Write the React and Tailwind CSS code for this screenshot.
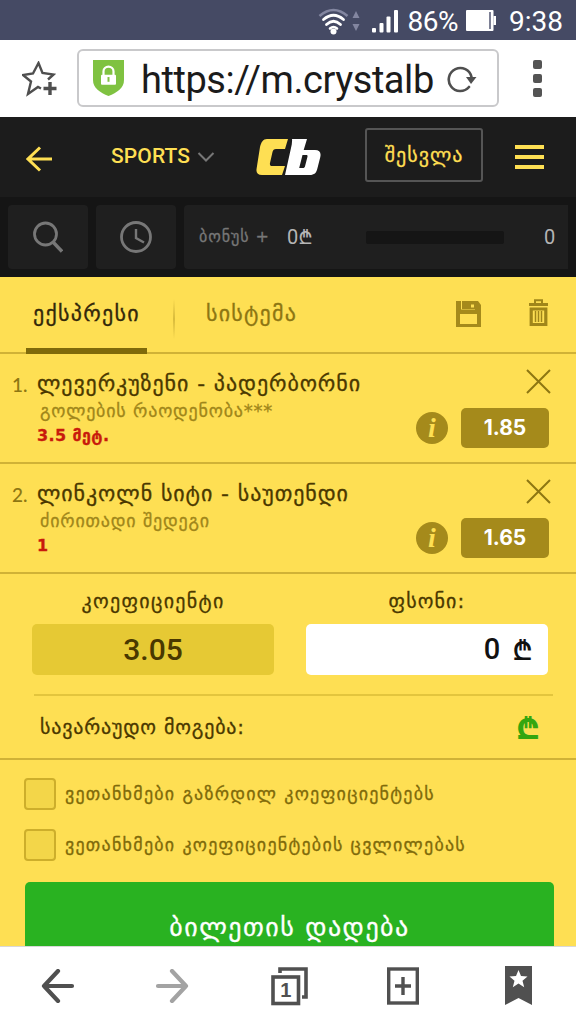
const geo = "font-['DejaVu_Sans',sans-serif] [-webkit-text-stroke:0.3px]";

function StatusBar() {
  return (
    <div className="flex h-10 shrink-0 items-center justify-end bg-[#454a64] pr-[13px] text-white">
      <svg width="44" height="30" viewBox="0 0 44 30" className="mr-[10px] mt-1" fill="none" strokeLinecap="round">
        <path d="M1.500 9Q15.500-3 29.500 9" stroke="#8386a0" strokeWidth="2.600" strokeLinecap="butt" />
        <path d="M5.500 12.500Q15.500 4 25.500 12.500" stroke="#fff" strokeWidth="2.800" />
        <path d="M8.500 17.500Q15.500 11 22.500 17.500" stroke="#fff" strokeWidth="2.800" />
        <path d="M12 21.500Q15.500 18.500 19 21.500" stroke="#fff" strokeWidth="2.600" />
        <circle cx="15.500" cy="24.500" r="3" fill="#fff" />
        <path d="M34.500 11L38 4l3.500 7zM34.500 17h7L38 24z" fill="#8386a0" />
      </svg>
      <svg width="28" height="26" viewBox="0 0 28 26" className="mr-2 mt-1" fill="#fff">
        <rect x="0" y="19" width="4" height="4.500" rx="1" />
        <rect x="7.500" y="14" width="4" height="9.500" rx="1" />
        <rect x="14.500" y="7.500" width="4" height="16" rx="1" />
        <rect x="22" y="1" width="4" height="22.500" rx="1" />
      </svg>
      <span className="mt-[3px] mr-[2px] font-[Roboto,sans-serif] text-[28px] leading-none tracking-[-0.5px]">86%</span>
      <svg width="31" height="21" viewBox="0 0 31 21" className="ml-[6px] mr-3">
        <rect x="0" y="0" width="27.500" height="21" rx="1" fill="#fff" />
        <rect x="27.500" y="6" width="2.500" height="9" fill="#fff" />
        <rect x="23" y="2" width="2" height="17" fill="#7d8095" />
      </svg>
      <span className="mt-[3px] font-[Roboto,sans-serif] text-[28px] leading-none">9:38</span>
    </div>
  );
}

function AddressBar() {
  return (
    <div className="flex h-[77px] shrink-0 items-center bg-white pl-[22px]">
      <svg width="36" height="36" viewBox="0 0 36 36" fill="none" stroke="#4f4f4f" strokeWidth="2.400">
        <path d="M19 27.500l-3-1.500-10 7 3-12.500-8-6.500 10-1.500L16.500 2l4 10 11 1.500-5.500 5" />
        <path d="M28 21v13M21.500 27.500h13" strokeWidth="3.400" />
      </svg>
      <div className="-mt-px ml-[19px] flex h-[58px] w-[422px] items-center rounded-md border-2 border-[#c9c9cb]">
        <svg width="31" height="36" viewBox="0 0 31 38" preserveAspectRatio="none" className="ml-[14px]">
          <path d="M0 0h31v21c0 9-7 13-15.500 17C7 34 0 30 0 21z" fill="#7fc241" />
          <path d="M10.500 16v-4a5 5 0 0 1 10 0v4" fill="none" stroke="#fff" strokeWidth="2.200" />
          <rect x="8" y="15.500" width="15" height="10.500" rx="1" fill="#fff" />
          <path d="M15.500 18v5" stroke="#7fc241" strokeWidth="2" />
        </svg>
        <span className="mt-[3px] ml-[17px] w-[295px] overflow-hidden font-[Roboto,sans-serif] text-[38px] leading-[52px] tracking-[-0.45px] whitespace-nowrap text-[#1b1b1b]">
          https://m.crystalb
        </span>
        <svg width="30" height="30" viewBox="0 0 30 30" className="mt-[2px] ml-[11px]" fill="none">
          <path d="M22 23A11.500 11.500 0 1 1 24.500 13" stroke="#4f4f4f" strokeWidth="2.600" strokeLinecap="round" />
          <path d="M19 13h10.500l-5.500 7z" fill="#4f4f4f" />
        </svg>
      </div>
      <div className="ml-[34px] flex flex-col gap-[5px]">
        <span className="size-[9px] rounded-[2px] bg-[#545454]" />
        <span className="size-[9px] rounded-[2px] bg-[#545454]" />
        <span className="size-[9px] rounded-[2px] bg-[#545454]" />
      </div>
    </div>
  );
}

function Header() {
  return (
    <div className="flex h-20 shrink-0 items-center bg-[#1c1c1c] pl-[26px]">
      <svg width="26" height="26" viewBox="0 0 26 26" className="mt-[3px]" fill="none" stroke="#fedf53" strokeWidth="3">
        <path d="M14 1.500L2 13l12 11.500M2 13h24" />
      </svg>
      <span className="ml-[59px] w-[78px] font-[Roboto,sans-serif] text-[21px] font-medium tracking-[0.1px] text-[#fedf53]">SPORTS</span>
      <svg width="18" height="10" viewBox="0 0 18 10" className="ml-[8px]" fill="none" stroke="#777" strokeWidth="2">
        <path d="M1.500 1L9 8.500 16.500 1" />
      </svg>
      <svg width="65" height="38" viewBox="0 0 65 38" className="ml-[41px]">
        <path d="M11 1h21l-3 10H20c-2 0-3 1-3.500 3L14 25c-.4 2 .3 3 2 3h13l-3 9H6c-4.500 0-6.300-2.500-5.300-7L4 9c1.300-5 3-8 7-8z" fill="#fedf53" />
        <path
          d="M36 1h15l-3.300 11H59c4.500 0 6.300 2.500 5.300 7L61.500 30c-1.200 5-3 7-8 7H29l6-27c.7-3 1.300-6 1-9zM46.500 17l-3.300 13h3.500c1.500 0 2-.5 2.400-2l2.300-9c.4-1.500 0-2-1.400-2z"
          fill="#fff"
          fillRule="evenodd"
        />
      </svg>
      <button className={`-mt-1 ml-[44px] flex h-[54px] w-[118px] items-center justify-center rounded-[3px] border-2 border-[#555] text-xl tracking-[1px] text-[#fedf53] ${geo}`}>
        შესვლა
      </button>
      <div className="ml-8 flex flex-col gap-[6px]">
        <span className="h-[4px] w-[29px] bg-[#fedf53]" />
        <span className="h-[4px] w-[29px] bg-[#fedf53]" />
        <span className="h-[4px] w-[29px] bg-[#fedf53]" />
      </div>
    </div>
  );
}

function BonusBar() {
  return (
    <div className="flex h-20 shrink-0 gap-2 bg-[#151515] p-2">
      <div className="flex w-20 items-center justify-center rounded bg-[#1f1f1f]">
        <svg width="30" height="32" viewBox="0 0 30 32" fill="none" stroke="#777" strokeWidth="2.800">
          <circle cx="12.500" cy="13" r="11" />
          <path d="M20 21l9 9.500" strokeWidth="3.400" />
        </svg>
      </div>
      <div className="flex w-20 items-center justify-center rounded bg-[#1f1f1f]">
        <svg width="32" height="32" viewBox="0 0 32 32" fill="none" stroke="#777" strokeWidth="2.800">
          <circle cx="16" cy="16" r="14.500" />
          <path d="M16 8v9l8 4.500" strokeWidth="2.400" />
        </svg>
      </div>
      <div className="flex flex-1 items-center rounded-l bg-[#1f1f1f] pl-[15px]">
        <span className={`w-[88px] text-base tracking-[0.9px] whitespace-nowrap text-[#777] ${geo}`}>ბონუს +</span>
        <span className="w-[79px] font-[Roboto,Inter,sans-serif] text-xl text-[#b5b5b5]">0₾</span>
        <span className="h-[13px] w-[138px] rounded-[2px] bg-[#151515]" />
        <span className="ml-[40px] font-[Roboto,sans-serif] text-xl text-[#b5b5b5]">0</span>
      </div>
    </div>
  );
}

function Tabs() {
  return (
    <div className="flex h-[77px] shrink-0 border-b-2 border-[#d0b236] pl-[26px]">
      <div className={`-mb-[2px] flex h-[77px] w-[121px] justify-center border-b-[6px] border-[#7f6a0a] pt-[20px] text-[22px] tracking-[1.3px] text-[#33280a] ${geo}`}>
        ექსპრესი
      </div>
      <span className="mt-[22px] ml-[26px] h-[40px] w-[2px] bg-linear-to-b from-[#fedf53] via-[#d8bb3c] to-[#fedf53]" />
      <span className={`mt-[20px] ml-[31px] w-[250px] text-[22px] tracking-[1.2px] text-[#8d7612] ${geo}`}>სისტემა</span>
      <svg width="25" height="26" viewBox="0 0 25 26" className="mt-6">
        <path d="M0 0h22l3 4v22H0z" fill="#a58a1b" />
        <path d="M5 0v8.500h14V0zM4 13h17v10H4z" fill="#fedf53" />
        <path d="M6 0h13v8H6z" fill="#a58a1b" />
        <rect x="15" y="3.500" width="3" height="3" fill="#fedf53" />
      </svg>
      <svg width="19" height="28" viewBox="0 0 19 28" className="mt-[22px] ml-[48px]" fill="none" stroke="#a0861a">
        <path d="M0 5.500h19" strokeWidth="3" />
        <path d="M6 4V1.300h7V4" strokeWidth="2" />
        <path d="M2.200 10v15.500h14.600V10z" strokeWidth="3.200" />
        <path d="M6.500 12v11M9.500 12v11M12.500 12v11" strokeWidth="1.500" />
      </svg>
    </div>
  );
}

const bets = [
  { id: 1, teams: 'ლევერკუზენი - პადერბორნი', market: 'გოლების რაოდენობა***', pick: '3.5 მეტ.', odd: '1.85' },
  { id: 2, teams: 'ლინკოლნ სიტი - საუთენდი', market: 'ძირითადი შედეგი', pick: '1', odd: '1.65' },
];

function Bet({ bet }) {
  return (
    <div className="flex h-[110px] shrink-0 justify-between border-b-2 border-[#d0b236] pr-[27px] pl-3">
      <div className="flex pt-[16px]">
        <span className="w-[25px] font-[Lato,sans-serif] text-[19px] leading-[30px] font-medium text-[#8d7612]">{bet.id}.</span>
        <div className={`whitespace-nowrap ${geo}`}>
          <div className="text-[22px] leading-7 tracking-[0.9px] text-[#4a3800]">{bet.teams}</div>
          <div className="pl-[3px] text-lg leading-[26px] tracking-[0.8px] text-[#a0861a]">{bet.market}</div>
          <div className="text-base leading-[23px] font-bold tracking-[0.4px] text-[#c81a0c]">{bet.pick}</div>
        </div>
      </div>
      <div className="flex flex-col items-end pt-[15px]">
        <svg width="25" height="25" viewBox="0 0 25 25" className="-mr-[2px]" stroke="#8d7612" strokeWidth="2">
          <path d="M1 1l23 23M24 1L1 24" />
        </svg>
        <div className="mt-[14px] flex items-center gap-[13px]">
          <span className="flex size-8 items-center justify-center rounded-full bg-[#a58a1b] font-['Liberation_Serif',serif] text-[28px] leading-none font-bold text-[#fedf53] italic">
            i
          </span>
          <span className="flex h-10 w-22 items-center justify-center rounded-[5px] bg-[#a58a1b] font-[Inter,sans-serif] text-[21px] font-bold text-white">
            {bet.odd}
          </span>
        </div>
      </div>
    </div>
  );
}

function Stake() {
  return (
    <div className="flex h-[186px] shrink-0 flex-col pt-[13px] border-b-2 border-[#d0b236]">
      <div className="flex gap-8 pl-8">
        <div className="w-[242px]">
          <div className={`h-[37px] text-center text-xl tracking-[1.3px] text-[#4a3800] ${geo}`}>კოეფიციენტი</div>
          <div className="flex h-[51px] items-center justify-center rounded-[5px] bg-[#e6c934] font-[Roboto,sans-serif] text-[30px] font-medium text-[#4a3800]">
            3.05
          </div>
        </div>
        <div className="w-[242px]">
          <div className={`h-[37px] text-center text-xl tracking-[1.1px] text-[#4a3800] ${geo}`}>ფსონი:</div>
          <div className="flex h-[51px] items-center justify-end gap-3 rounded-[5px] bg-white pr-[15px] font-[Roboto,sans-serif] text-[29px] font-medium text-[#111]">
            <span>0</span>
            <span className="font-[Inter,sans-serif] text-[28px]">₾</span>
          </div>
        </div>
      </div>
      <div className="mt-[19px] mr-[23px] ml-[34px] flex h-[64px] items-center justify-between border-t-2 border-[#e3c53d] pr-[13px] pl-[6px]">
        <span className={`text-xl tracking-[0.8px] whitespace-nowrap text-[#4a3800] ${geo}`}>სავარაუდო მოგება:</span>
        <span className="font-[Inter,sans-serif] text-[31px] leading-none font-extrabold text-[#35a60f]">₾</span>
      </div>
    </div>
  );
}

function Agree({ label }) {
  return (
    <div className="flex h-[51px] items-center gap-[9px]">
      <span className="size-8 rounded-[4px] border-2 border-[#cdae2b] bg-[#f3d649]" />
      <span className={`text-lg tracking-[1.25px] whitespace-nowrap text-[#7f6a0a] ${geo}`}>{label}</span>
    </div>
  );
}

function Toolbar() {
  return (
    <div className="flex h-[78px] shrink-0 items-center border-t border-[#d8d8d8] bg-white pl-[41px]">
      <svg width="34" height="34" viewBox="0 0 34 34" fill="none" stroke="#505050" strokeWidth="4.200" strokeLinecap="round" strokeLinejoin="round">
        <path d="M17 2L3 17l14 15M3 17h28" />
      </svg>
      <svg width="34" height="34" viewBox="0 0 34 34" className="ml-[80px]" fill="none" stroke="#a3a3a3" strokeWidth="4.200" strokeLinecap="round" strokeLinejoin="round">
        <path d="M17 2l14 15-14 15M31 17H3" />
      </svg>
      <svg width="38" height="40" viewBox="0 0 38 40" className="ml-[82px]" fill="none" stroke="#505050" strokeWidth="3.600">
        <rect x="2" y="11" width="25.500" height="26.500" />
        <path d="M9 7V3h26v28h-4" />
        <text x="14.700" y="31" textAnchor="middle" fill="#505050" stroke="none" className="font-['Liberation_Sans',sans-serif] text-[20px] font-bold">1</text>
      </svg>
      <svg width="32" height="38" viewBox="0 0 32 38" className="ml-[78px]" fill="none" stroke="#505050" strokeWidth="3.400">
        <rect x="1.700" y="2" width="28.600" height="34" />
        <path d="M16 10v18M8 19h16" />
      </svg>
      <svg width="28" height="39" viewBox="0 0 28 39" className="ml-[86px]">
        <path d="M0 0h27v39l-13.500-7L0 39z" fill="#505050" />
        <path d="M13.500 4l2.500 6 6.500.5-5 4.200 1.700 6.500-5.700-3.600-5.700 3.600 1.700-6.500-5-4.200L11 10z" fill="#fff" />
      </svg>
    </div>
  );
}

export default function App() {
  return (
    <div className="flex h-[1024px] w-[576px] flex-col overflow-hidden bg-[#fedf53]">
      <StatusBar />
      <AddressBar />
      <Header />
      <BonusBar />
      <Tabs />
      {bets.map((bet) => (
        <Bet key={bet.id} bet={bet} />
      ))}
      <Stake />
      <div className="min-h-0 flex-1 overflow-hidden px-6 pt-[8px]">
        <Agree label="ვეთანხმები გაზრდილ კოეფიციენტებს" />
        <Agree label="ვეთანხმები კოეფიციენტების ცვლილებას" />
        <button className={`mt-[12px] ml-px flex h-[90px] w-[529px] items-center justify-center rounded-[5px] bg-[#29b221] text-[26px] tracking-[1.5px] text-white ${geo}`}>
          ბილეთის დადება
        </button>
      </div>
      <Toolbar />
    </div>
  );
}
